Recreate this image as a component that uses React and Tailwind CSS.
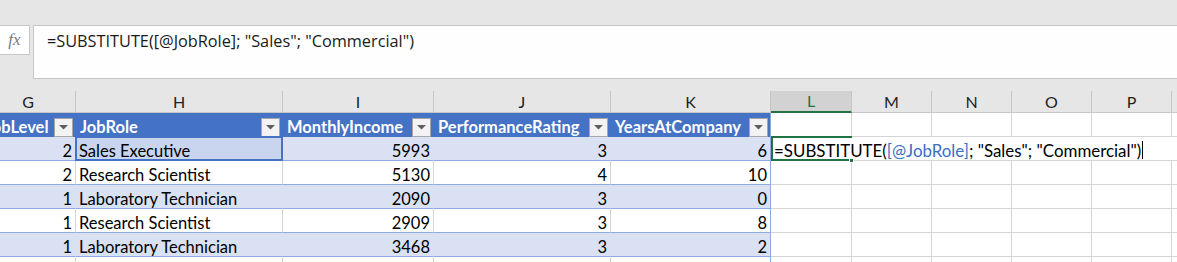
import React from 'react';

const cellFont = { fontFamily: 'Lato, "Liberation Sans", sans-serif' };

// column boundaries measured from the sheet, right border pixel sits on the gridline
const cols = [
    { key: 'G', w: 'w-[95px]', title: 'JobLevel', align: 'right' },
    { key: 'H', w: 'w-[207px]', title: 'JobRole', align: 'left' },
    { key: 'I', w: 'w-[151px]', title: 'MonthlyIncome', align: 'right' },
    { key: 'J', w: 'w-[177px]', title: 'PerformanceRating', align: 'right' },
    { key: 'K', w: 'w-[160px]', title: 'YearsAtCompany', align: 'right' },
];

const extra = [
    { key: 'L', w: 'w-[81px]', label: 'L' },
    { key: 'M', w: 'w-[80px]', label: 'M' },
    { key: 'N', w: 'w-[80px]', label: 'N' },
    { key: 'O', w: 'w-[80px]', label: 'O' },
    { key: 'P', w: 'w-[80px]', label: 'P' },
    { key: 'Q', w: 'w-[80px]', label: '' },
];

const rows = [
    [2, 'Sales Executive', 5993, 3, 6],
    [2, 'Research Scientist', 5130, 4, 10],
    [1, 'Laboratory Technician', 2090, 3, 0],
    [1, 'Research Scientist', 2909, 3, 8],
    [1, 'Laboratory Technician', 3468, 3, 2],
];

function FilterButton() {
    return (
        <div className="flex h-[19px] w-[19px] shrink-0 items-center justify-center border border-[#a6a6a6] bg-[#f3f3f3]">
            <svg width="9" height="5" viewBox="0 0 9 5">
                <path d="M0 0h9L4.5 4.5z" fill="#5f5f5f" />
            </svg>
        </div>
    );
}

export default function App() {
    return (
        <div className="h-[262px] w-[1177px] overflow-hidden bg-[#e6e6e6]">
            {/* formula bar */}
            <div className="flex gap-[3px] pt-[25px]">
                <div className="-ml-px flex h-[30px] w-[31px] items-center justify-center border border-[#c6c6c6] bg-white">
                    <span className="text-[17px] italic text-[#7b7b7b]" style={{ fontFamily: '"Liberation Serif", serif' }}>fx</span>
                </div>
                <div className="-mr-[4px] h-[54px] flex-1 border border-[#c6c6c6] bg-[#fefefe] pl-[13px] pt-[3px]">
                    <span className="text-[16.3px] leading-[22px] text-[#1a1a1a]" style={{ fontFamily: '"Open Sans", sans-serif' }}>
                        =SUBSTITUTE([@JobRole]; "Sales"; "Commercial")
                    </span>
                </div>
            </div>

            <div className="mt-[12px] -ml-[19px] w-[1300px]" style={cellFont}>
                {/* column letters */}
                <div className="flex h-[22px] border-b border-[#c6c6c6] text-[16px] text-[#222]">
                    {cols.map((c) => (
                        <div key={c.key} className={`${c.w} flex shrink-0 items-center justify-center border-r border-[#c6c6c6]`}>{c.key}</div>
                    ))}
                    {extra.map((c) =>
                        c.key === 'L' ? (
                            <div key={c.key} className={`${c.w} -mb-px flex shrink-0 items-center justify-center border-r border-b-2 border-r-[#c6c6c6] border-b-[#217346] bg-[#d2d2d2] text-[#217346]`}>{c.label}</div>
                        ) : (
                            <div key={c.key} className={`${c.w} flex shrink-0 items-center justify-center border-r border-[#c6c6c6]`}>{c.label}</div>
                        )
                    )}
                </div>

                {/* table header */}
                <div className="flex h-[24px] text-[16.5px]">
                    {cols.map((c, i) => (
                        <div
                            key={c.key}
                            className={`${c.w} flex shrink-0 items-end justify-between bg-[#4472c4] pl-[4px] pr-[2px] font-bold text-white ${i === cols.length - 1 ? 'border-r border-[#8ea9db]' : 'border-r border-[#4472c4]'}`}
                        >
                            <span className="self-center whitespace-nowrap pt-[3px] leading-[20px]">{c.title}</span>
                            <FilterButton />
                        </div>
                    ))}
                    {extra.map((c) => (
                        <div key={c.key} className={`${c.w} shrink-0 border-r border-b border-[#d4d4d4] bg-white`} />
                    ))}
                </div>

                {/* data rows */}
                {rows.map((r, ri) => {
                    const band = ri % 2 === 0;
                    return (
                        <div key={ri} className="flex h-[24px] text-[16.5px] text-black">
                            {cols.map((c, ci) => {
                                const selected = ri === 0 && ci === 1;
                                let cls = band ? 'bg-[#d9e1f2] border-r border-[#d9e1f2]' : 'bg-white border-r border-[#d4d4d4]';
                                if (ci === cols.length - 1) cls = (band ? 'bg-[#d9e1f2]' : 'bg-white') + ' border-r border-[#8ea9db]';
                                return (
                                    <div
                                        key={c.key}
                                        className={`${c.w} relative flex shrink-0 items-end border-b border-b-[#8ea9db] px-[3px] ${cls} ${c.align === 'right' ? 'justify-end' : 'justify-start'}`}
                                    >
                                        {selected && <div className="absolute -left-px -top-px bottom-[-1px] right-[-1px] border-2 border-[#4472c4] bg-[#c9d5ee]" />}
                                        <span className="relative whitespace-nowrap leading-[18px]">{r[ci]}</span>
                                    </div>
                                );
                            })}
                            {ri === 0 ? (
                                <div className="relative flex h-[24px] flex-1 items-end border-b border-[#d4d4d4] bg-white pl-[3px]">
                                    <span className="whitespace-nowrap text-[16.9px] leading-[18px]">
                                        =SUBSTITUTE(<span className="text-[#3b6ec4]">[@JobRole]</span>; "Sales"; "Commercial")
                                    </span>
                                    <span className="ml-[1px] mb-[1px] h-[18px] w-px bg-black" />
                                    {/* active cell border */}
                                    <div className="absolute -top-px bottom-[-1px] left-0 w-[81px] border-y-2 border-l-2 border-[#217346]" />
                                    <div className="absolute bottom-[-3px] left-[78px] h-[5px] w-[5px] border border-white bg-[#217346]" />
                                </div>
                            ) : (
                                extra.map((c) => (
                                    <div key={c.key} className={`${c.w} shrink-0 border-r border-b border-[#d4d4d4] bg-white`} />
                                ))
                            )}
                        </div>
                    );
                })}

                {/* next row, only its top edge is in view */}
                <div className="flex h-[24px]">
                    {cols.map((c, ci) => (
                        <div key={c.key} className={`${c.w} shrink-0 border-r bg-white ${ci === cols.length - 1 ? 'border-[#8ea9db]' : 'border-[#d4d4d4]'}`} />
                    ))}
                    {extra.map((c) => (
                        <div key={c.key} className={`${c.w} shrink-0 border-r border-[#d4d4d4] bg-white`} />
                    ))}
                </div>
            </div>
        </div>
    );
}
